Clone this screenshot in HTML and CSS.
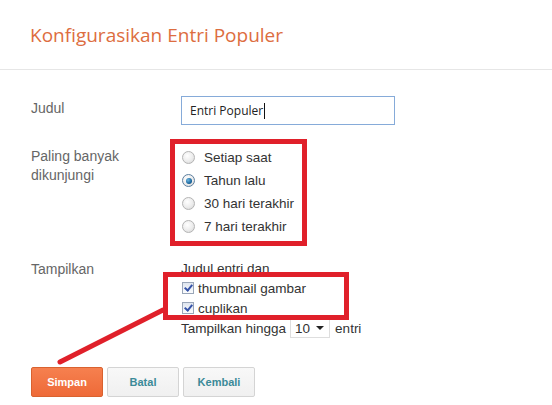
FILE: index.html
```html
<!DOCTYPE html>
<html>
<head>
  <meta charset="UTF-8" />
  <title>Konfigurasikan Entri Populer</title>
  <link rel="stylesheet" href="styles.css">
</head>
<body>

<div class="page">
  <div class="header">
    <h1>Konfigurasikan Entri Populer</h1>
  </div>

  <div class="form">
    <div class="row row-title">
      <div class="label">Judul</div>
      <div class="field">
        <div class="text-input">Entri Populer<span class="caret"></span></div>
      </div>
    </div>

    <div class="row row-range">
      <div class="label">Paling banyak<br>dikunjungi</div>
      <div class="field">
        <div class="option"><span class="radio"></span>Setiap saat</div>
        <div class="option"><span class="radio checked"></span>Tahun lalu</div>
        <div class="option"><span class="radio"></span>30 hari terakhir</div>
        <div class="option"><span class="radio"></span>7 hari terakhir</div>
      </div>
    </div>

    <div class="row row-show">
      <div class="label">Tampilkan</div>
      <div class="field">
        <div class="line">Judul entri dan</div>
        <div class="line"><span class="check"></span>thumbnail gambar</div>
        <div class="line"><span class="check"></span>cuplikan</div>
        <div class="line">Tampilkan hingga<span class="select">10 <span class="arrow"></span></span>entri</div>
      </div>
    </div>

    <div class="buttons">
      <button class="btn btn-primary">Simpan</button>
      <button class="btn">Batal</button>
      <button class="btn">Kembali</button>
    </div>
  </div>

  <!-- red annotations drawn on top of the screenshot -->
  <svg class="marks" width="552" height="405" viewBox="0 0 552 405">
    <rect x="172.5" y="141.5" width="132" height="102" fill="none" stroke="#e0202a" stroke-width="5"/>
    <rect x="165.5" y="274.5" width="181" height="43" fill="none" stroke="#e0202a" stroke-width="5"/>
    <line x1="60" y1="362" x2="163" y2="310" stroke="#e0202a" stroke-width="5" stroke-linecap="round"/>
  </svg>
</div>

</body>
</html>
```

FILE: styles.css
```css
body {
  margin: 0;
  background: #fff;
  font-family: "Liberation Sans", Arial, sans-serif;
  color: #333;
}

.page {
  position: relative;
  width: 552px;
  height: 405px;
  overflow: hidden;
}

.header {
  height: 70px;
  box-sizing: border-box;
  padding: 21px 30px 0;
  border-bottom: 1px solid #e6e6e6;
}

.header h1 {
  margin: 0;
  font-family: "Open Sans", sans-serif;
  font-weight: 400;
  font-size: 19px;
  line-height: 28px;
  color: #dd6d40;
}

.form {
  padding: 26px 0 0 31px;
}

.row {
  display: flex;
}

.label {
  width: 150px;
  flex: none;
  font-size: 14px;
  line-height: 19px;
  color: #666;
}

.row-title .label { padding-top: 3px; }

.text-input {
  width: 214px;
  height: 29px;
  box-sizing: border-box;
  border: 1px solid #86abd9;
  padding: 0 8px;
  font-family: "Open Sans", sans-serif;
  font-size: 12px;
  line-height: 27px;
  color: #222;
  display: flex;
  align-items: center;
}

.caret {
  display: inline-block;
  width: 1px;
  height: 16px;
  background: #111;
  margin-left: 1px;
}

.row-range { margin-top: 21px; }
.row-range .label { padding-top: 1px; }

.option {
  display: flex;
  align-items: center;
  height: 23px;
  font-size: 13.5px;
}

.radio {
  width: 11px;
  height: 11px;
  border-radius: 50%;
  border: 1px solid #b4b4b4;
  background: radial-gradient(circle at 40% 35%, #fff 0%, #ececec 55%, #d2d2d2 100%);
  margin: 0 9px 0 1px;
  box-sizing: content-box;
  position: relative;
}

.radio.checked {
  border-color: #5d7f9f;
}

.radio.checked::after {
  content: "";
  position: absolute;
  left: 2.5px;
  top: 2.5px;
  width: 6px;
  height: 6px;
  border-radius: 50%;
  background: radial-gradient(circle at 35% 35%, #6cb6e0, #17629a 65%, #0b3f6b);
}

.row-show { margin-top: 20px; }
.row-show .label { padding-top: 2px; }

.line {
  display: flex;
  align-items: center;
  height: 20px;
  font-size: 13.5px;
}

.check {
  width: 10px;
  height: 10px;
  border: 1px solid #9aa6b8;
  background: linear-gradient(#dfe5ee, #fbfcfd);
  margin: 0 4px 0 1px;
  position: relative;
}

.check::after {
  content: "";
  position: absolute;
  left: 3px;
  top: 0px;
  width: 3px;
  height: 6px;
  border: solid #3653a8;
  border-width: 0 2px 2px 0;
  transform: rotate(40deg);
}

.select {
  display: inline-flex;
  align-items: center;
  height: 20px;
  box-sizing: border-box;
  margin: 0 5px 0 4px;
  padding: 0 5px 0 4px;
  border: 1px solid #dedede;
  gap: 6px;
}

.arrow {
  width: 0;
  height: 0;
  border-left: 4px solid transparent;
  border-right: 4px solid transparent;
  border-top: 4px solid #222;
}

.buttons {
  display: flex;
  gap: 4px;
  margin-top: 29px;
}

.btn {
  width: 72px;
  height: 30px;
  border: 1px solid #d4d4d4;
  border-radius: 2px;
  background: linear-gradient(#f8f8f8, #f0f0f0);
  font-family: "Liberation Sans", Arial, sans-serif;
  font-weight: bold;
  font-size: 11px;
  color: #3b8a98;
  padding: 0;
}

.btn-primary {
  background: linear-gradient(#f6804f, #ee6a38);
  border-color: #d9622f;
  color: #fff;
}

.marks {
  position: absolute;
  left: 0;
  top: 0;
  pointer-events: none;
}
```
